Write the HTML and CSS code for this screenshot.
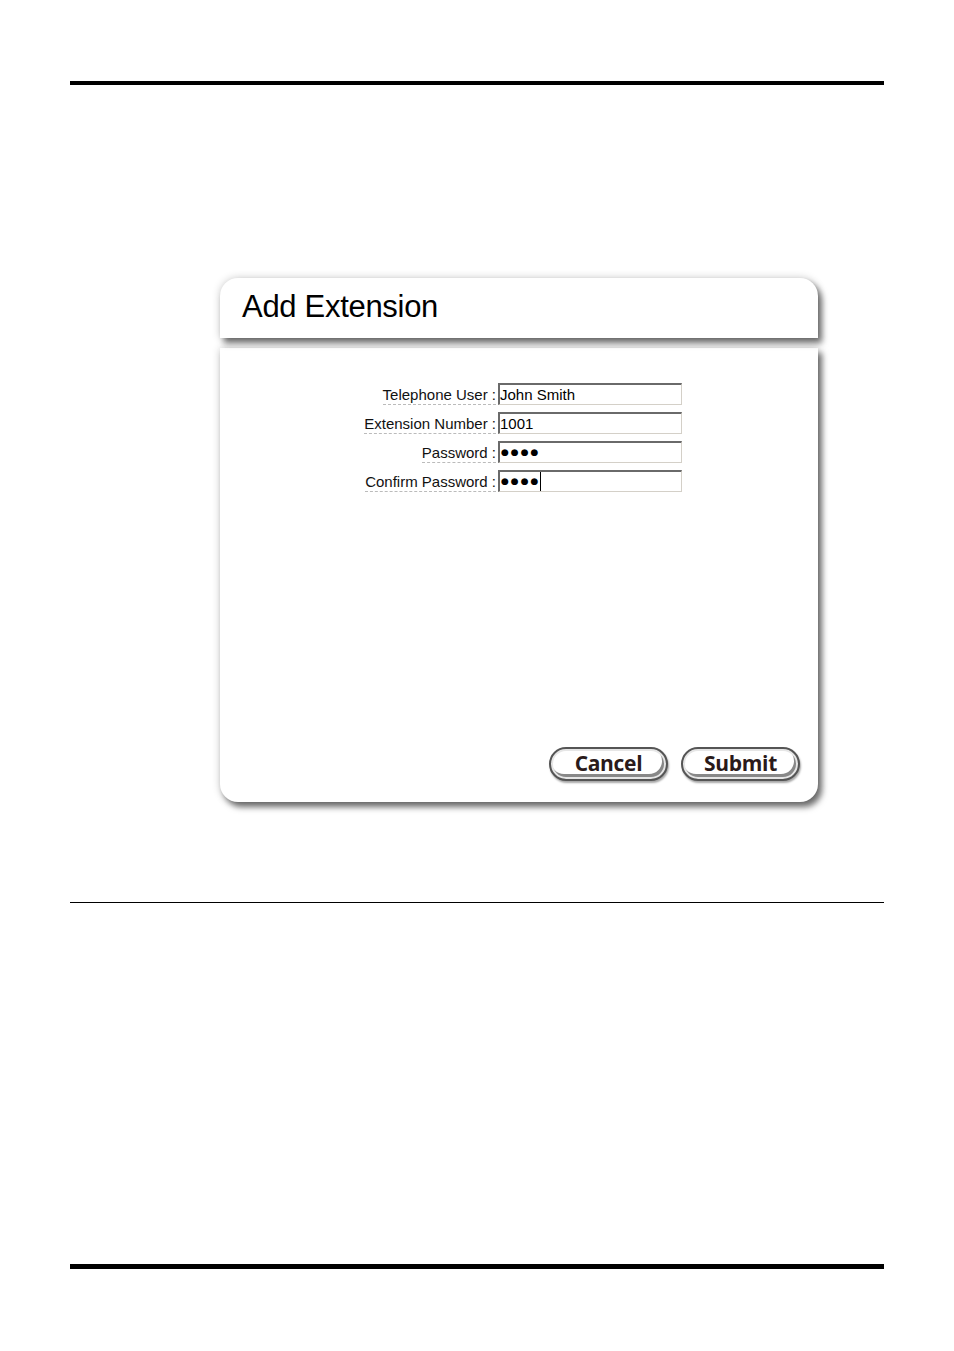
FILE: index.html
```html
<!DOCTYPE html>
<html>
<head>
<meta charset="utf-8">
<link rel="stylesheet" href="styles.css">
</head>
<body>
<div class="page">
  <div class="rule rule-top"></div>
  <div class="panel">
    <div class="panel-head">
      <h1 class="title">Add Extension</h1>
    </div>
    <div class="panel-body">
      <div class="form">
        <div class="label"><span class="label-text">Telephone User :</span></div>
        <div class="field">John Smith</div>
        <div class="label"><span class="label-text">Extension Number :</span></div>
        <div class="field">1001</div>
        <div class="label"><span class="label-text">Password :</span></div>
        <div class="field"><span class="dots">●●●●</span></div>
        <div class="label"><span class="label-text">Confirm Password :</span></div>
        <div class="field"><span class="dots caret">●●●●</span></div>
      </div>
      <div class="actions">
        <button class="btn">Cancel</button>
        <button class="btn">Submit</button>
      </div>
    </div>
  </div>
  <div class="rule rule-mid"></div>
  <div class="rule rule-bottom"></div>
</div>
</body>
</html>
```
FILE: styles.css
```css
html, body {
  margin: 0;
  padding: 0;
  background: #fff;
}
body {
  font-family: "Liberation Sans", Arial, sans-serif;
  color: #000;
}
.page {
  width: 814px;
  margin-left: 70px;
}
.rule {
  background: #000;
}
.rule-top {
  margin-top: 81px;
  height: 4px;
}
.rule-mid {
  margin-top: 100px;
  height: 1px;
}
.rule-bottom {
  margin-top: 361px;
  height: 5px;
}
.panel {
  margin-top: 193px;
  margin-left: 150px;
  width: 598px;
}
.panel-head {
  height: 60px;
  background: #fff;
  border-radius: 18px 18px 0 0;
  box-shadow: 0 0 8px rgba(0,0,0,0.2), 4px 5px 6px rgba(0,0,0,0.55);
  box-sizing: border-box;
  padding: 12px 0 0 22px;
  position: relative;
  z-index: 1;
}
.title {
  margin: 0;
  font-weight: normal;
  font-size: 31px;
  line-height: 34px;
  letter-spacing: -0.3px;
}
.panel-body {
  margin-top: 10px;
  height: 454px;
  background: #fff;
  border-radius: 0 0 18px 18px;
  box-shadow: 0 0 8px rgba(0,0,0,0.2), 4px 5px 6px rgba(0,0,0,0.55);
  box-sizing: border-box;
  padding: 35px 18px 21px 0;
  display: flex;
  flex-direction: column;
  justify-content: space-between;
}
.form {
  display: grid;
  grid-template-columns: 276px 184px;
  grid-auto-rows: 22px;
  column-gap: 2px;
  row-gap: 7px;
}
.label {
  display: flex;
  justify-content: flex-end;
  align-items: flex-start;
  height: 22px;
  font-size: 15px;
  color: #111;
}
.label-text {
  display: block;
  line-height: 19px;
  padding-top: 2px;
  border-bottom: 1px dashed #bbb;
}
.field {
  height: 22px;
  box-sizing: border-box;
  border-top: 2px solid #6a6a6a;
  border-left: 2px solid #6a6a6a;
  border-right: 1px solid #d4d0c8;
  border-bottom: 1px solid #d4d0c8;
  font-size: 15px;
  line-height: 19px;
  padding-left: 0;
  white-space: nowrap;
}
.dots {
  display: inline-block;
  font-family: "DejaVu Sans", sans-serif;
  font-size: 9px;
  letter-spacing: 2px;
  line-height: 19px;
  padding-left: 1px;
  vertical-align: top;
}
.caret {
  border-right: 1px solid #000;
  margin-right: 0;
}
.actions {
  display: flex;
  justify-content: flex-end;
  gap: 13px;
}
.btn {
  width: 119px;
  height: 34px;
  border-radius: 17px;
  background: #fff;
  border: 2px solid #555;
  box-shadow: inset 0 0 0 2px #e6e6e6, inset -2px -3px 0 2px #888, 1px 2px 2px rgba(0,0,0,0.35);
  font-family: "Open Sans", sans-serif;
  font-weight: 700;
  font-size: 21px;
  line-height: 28px;
  color: #2a1a1a;
  padding: 0 0 2px 0;
  letter-spacing: -0.3px;
}
```
